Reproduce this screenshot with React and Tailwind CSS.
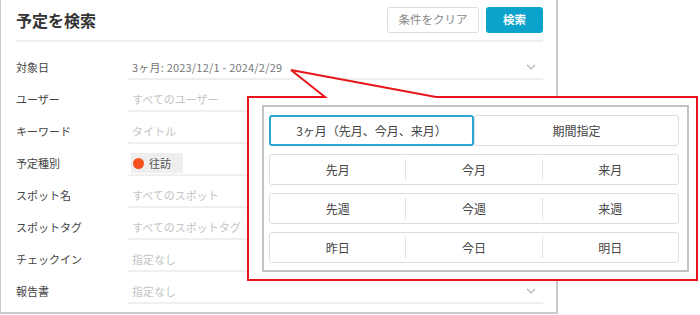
const rows = [
  { label: '対象日', value: '3ヶ月: 2023/12/1 - 2024/2/29', filled: true, chevron: true },
  { label: 'ユーザー', value: 'すべてのユーザー' },
  { label: 'キーワード', value: 'タイトル' },
  { label: '予定種別', chip: '往訪' },
  { label: 'スポット名', value: 'すべてのスポット' },
  { label: 'スポットタグ', value: 'すべてのスポットタグ' },
  { label: 'チェックイン', value: '指定なし' },
  { label: '報告書', value: '指定なし', chevron: true },
];

const presets = [
  ['先月', '今月', '来月'],
  ['先週', '今週', '来週'],
  ['昨日', '今日', '明日'],
];

function Chevron() {
  return (
    <svg width="10" height="6" viewBox="0 0 10 6" className="shrink-0">
      <path d="M1 1l4 4 4-4" fill="none" stroke="#b5b5b5" strokeWidth="1.2" />
    </svg>
  );
}

export default function App() {
  return (
    <div
      className="relative w-[700px] h-[315px] bg-white overflow-hidden text-[#333]"
      style={{ fontFamily: '"Noto Sans CJK JP", "Noto Sans", sans-serif' }}
    >
      {/* search panel */}
      <div className="w-[558px] h-[314px] border-l border-r-2 border-b-2 border-[#cbcbcb] pl-[15px] pr-[13px]">
        <div className="flex items-center justify-between h-[42px] border-b-2 border-[#eeeeee]">
          <h1 className="text-[16px] font-bold text-[#333] leading-none">予定を検索</h1>
          <div className="flex items-center gap-[7px]">
            <button className="h-[26px] w-[92px] border border-[#dcdcdc] rounded-[3px] bg-white text-[11.5px] text-[#888]">
              条件をクリア
            </button>
            <button className="h-[26px] w-[57px] rounded-[3px] bg-[#0ba3cc] text-[11.5px] font-bold text-white">
              検索
            </button>
          </div>
        </div>

        <div className="mt-[6px] flex flex-col">
          {rows.map((r) => (
            <div key={r.label} className="flex h-[32px]">
              <div className="w-[112px] pt-[9px] leading-5 text-[11px] text-[#444]">{r.label}</div>
              <div className="flex-1 flex items-start justify-between border-b-2 border-[#efefef] pl-[4px] pr-[7px]">
                {r.chip ? (
                  <div className="mt-[9px] -ml-[1px] h-5 flex items-center gap-[5px] bg-[#eeeeee] pl-[2px] pr-[12px]">
                    <span className="w-[11px] h-[11px] rounded-full bg-[#f4511e]" />
                    <span className="text-[11px] text-[#555] leading-5">{r.chip}</span>
                  </div>
                ) : (
                  <span
                    className={`pt-[9px] leading-5 text-[11px] ${
                      r.filled ? 'text-[#777] tracking-[0.2px]' : 'text-[#c4c4c4]'
                    }`}
                  >
                    {r.value}
                  </span>
                )}
                {r.chevron && (
                  <div className="pt-[16px]">
                    <Chevron />
                  </div>
                )}
              </div>
            </div>
          ))}
        </div>
      </div>

      {/* callout */}
      <svg className="absolute left-0 top-0" width="700" height="315" viewBox="0 0 700 315">
        <polygon
          points="248,97 325,97 291,70 436,97 697,97 697,280 248,280"
          fill="#ffffff"
          stroke="#e8161b"
          strokeWidth="2"
        />
      </svg>

      <div className="absolute left-[262px] top-[105px] w-[427px] h-[167px] border-2 border-[#c2c2c2] bg-white pl-[5px] pr-[8px] pt-[8px] flex flex-col gap-[8px]">
        <div className="flex h-[31px] text-[12px] text-[#444]">
          <div className="w-[205px] flex items-center justify-center border-2 border-[#2aa7d0] rounded-[3px]">
            3ヶ月（先月、今月、来月）
          </div>
          <div className="flex-1 flex items-center justify-center border border-[#dedede] rounded-[3px]">
            期間指定
          </div>
        </div>
        {presets.map((p) => (
          <div key={p[0]} className="flex items-center h-[31px] border border-[#dedede] rounded-[3px] text-[12px] text-[#444]">
            <div className="flex-1 text-center">{p[0]}</div>
            <div className="w-px h-[21px] bg-[#e2e2e2]" />
            <div className="flex-1 text-center">{p[1]}</div>
            <div className="w-px h-[21px] bg-[#e2e2e2]" />
            <div className="flex-1 text-center">{p[2]}</div>
          </div>
        ))}
      </div>
    </div>
  );
}
